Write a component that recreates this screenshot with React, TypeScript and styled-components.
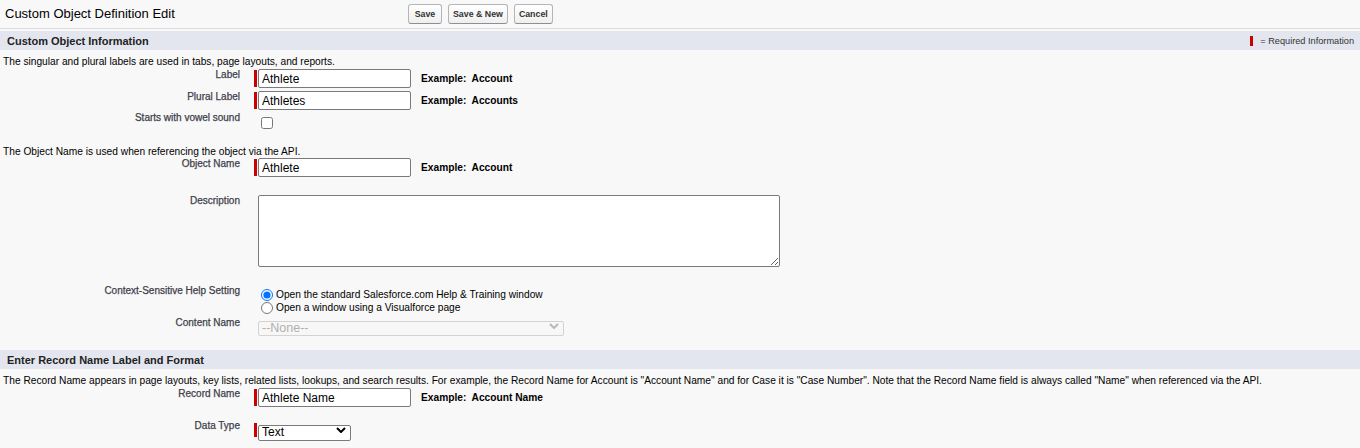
import React from "react";
import styled, { createGlobalStyle } from "styled-components";

const GlobalStyle = createGlobalStyle`
  html, body { margin: 0; padding: 0; background: #f8f8f8; }
  body { font-family: "Liberation Sans", Arial, sans-serif; color: #000; }
  * { box-sizing: border-box; }
`;

const Page = styled.div`
  width: 1360px;
  height: 448px;
  overflow: hidden;
  background: #f8f8f8;
`;

const PageHeader = styled.div`
  display: flex;
  align-items: center;
  height: 29px;
  border-bottom: 1px solid #dcdcdc;
`;

const Title = styled.h2`
  width: 30%;
  margin: 0;
  padding-left: 5px;
  font-size: 13px;
  font-weight: normal;
  line-height: 16px;
  color: #000;
`;

const ButtonBar = styled.div`
  display: flex;
  gap: 6px;
`;

const Btn = styled.button<{ $minW?: number }>`
  height: 20px;
  min-width: ${(p) => p.$minW ?? 0}px;
  padding: 0 4px;
  border: 1px solid #b5b5b5;
  border-bottom-color: #8f8f8f;
  border-radius: 3px;
  background: linear-gradient(#ffffff, #efefef);
  font-family: inherit;
  font-size: 8.8px;
  font-weight: bold;
  color: #333;
`;

const SectionBar = styled.div<{ $mt: number }>`
  margin-top: ${(p) => p.$mt}px;
  height: 19px;
  background: #e3e6ee;
  display: flex;
  align-items: center;
  justify-content: space-between;
  padding: 0 6px 0 7px;
`;

const SectionTitle = styled.h3`
  margin: 0;
  font-size: 11px;
  font-weight: bold;
  color: #222;
`;

const Legend = styled.span`
  display: flex;
  align-items: center;
  font-size: 9.2px;
  color: #333;
`;

const LegendMark = styled.span`
  width: 3px;
  height: 10px;
  background: #c00;
  margin-right: 7px;
`;

const Info = styled.p<{ $mt: number }>`
  margin: ${(p) => p.$mt}px 0 0;
  padding-left: 3px;
  font-size: 10.2px;
  line-height: 13px;
  color: #000;
  white-space: nowrap;
`;

const FieldRow = styled.div<{ $mt: number }>`
  display: grid;
  grid-template-columns: 240px 1fr;
  column-gap: 14px;
  align-items: start;
  margin-top: ${(p) => p.$mt}px;
`;

const FieldLabel = styled.label`
  text-align: right;
  font-size: 10px;
  font-weight: normal;
  line-height: 12px;
  color: #3f3f4a;
  -webkit-text-stroke: 0.25px #3f3f4a;
`;

const DataCell = styled.div<{ $pt?: number; $req?: boolean }>`
  display: flex;
  align-items: stretch;
  padding-top: ${(p) => p.$pt ?? 0}px;
  padding-left: ${(p) => (p.$req ? 0 : 4)}px;
`;

const RequiredBar = styled.span`
  width: 3px;
  margin: 1px 1px 1px 0;
  background: #c00;
`;

const TextInput = styled.input`
  width: 153px;
  height: 19px;
  padding: 0 3px;
  border: 1px solid #7a7a7a;
  border-radius: 2px;
  background: #fff;
  font-family: inherit;
  font-size: 12px;
  color: #000;
`;

const Example = styled.span`
  align-self: center;
  margin-left: 10px;
  font-size: 10.2px;
  font-weight: bold;
  color: #000;
  white-space: pre;
`;

const Check = styled.input`
  width: 12px;
  height: 12px;
  margin: 5px 0 0 3px;
`;

const TextArea = styled.textarea`
  width: 522px;
  height: 72px;
  border: 1px solid #7a7a7a;
  border-radius: 2px;
  background: #fff;
  font-family: inherit;
  font-size: 12px;
`;

const RadioGroup = styled.div`
  display: flex;
  flex-direction: column;
`;

const RadioLine = styled.label`
  display: flex;
  align-items: center;
  height: 13px;
  font-size: 10.2px;
  color: #000;
  white-space: nowrap;
`;

const Radio = styled.input`
  width: 12px;
  height: 12px;
  margin: 0 3px 0 3px;
`;

const SelectWrap = styled.div<{ $w: number; $h: number }>`
  position: relative;
  width: ${(p) => p.$w}px;
  height: ${(p) => p.$h}px;
`;

const Select = styled.select<{ $muted?: boolean }>`
  appearance: none;
  width: 100%;
  height: 100%;
  padding: 0 0 0 3px;
  border: 1px solid ${(p) => (p.$muted ? "#d3d3d3" : "#7a7a7a")};
  border-radius: 2px;
  background: ${(p) => (p.$muted ? "#f7f7f7" : "#fff")};
  font-family: inherit;
  font-size: ${(p) => (p.$muted ? 12.5 : 12)}px;
  line-height: 13px;
  color: ${(p) => (p.$muted ? "#b0b0b0" : "#000")};
  opacity: 1;
`;

const Chevron = styled.svg`
  position: absolute;
  right: 5px;
  top: 50%;
  margin-top: -3px;
  pointer-events: none;
`;

function ChevronIcon({ color }: { color: string }) {
  return (
    <Chevron width="10" height="6" viewBox="0 0 10 6">
      <path d="M1 1 L5 5 L9 1" fill="none" stroke={color} strokeWidth="2" />
    </Chevron>
  );
}

export default function App() {
  return (
    <Page>
      <GlobalStyle />
      <PageHeader>
        <Title>Custom Object Definition Edit</Title>
        <ButtonBar>
          <Btn $minW={34}>Save</Btn>
          <Btn>Save &amp; New</Btn>
          <Btn>Cancel</Btn>
        </ButtonBar>
      </PageHeader>

      <SectionBar $mt={2}>
        <SectionTitle>Custom Object Information</SectionTitle>
        <Legend>
          <LegendMark />= Required Information
        </Legend>
      </SectionBar>

      <Info $mt={5}>The singular and plural labels are used in tabs, page layouts, and reports.</Info>

      <FieldRow $mt={1}>
        <FieldLabel>Label</FieldLabel>
        <DataCell $req>
          <RequiredBar />
          <TextInput defaultValue="Athlete" />
          <Example>{"Example:\u00a0 Account"}</Example>
        </DataCell>
      </FieldRow>

      <FieldRow $mt={3}>
        <FieldLabel>Plural Label</FieldLabel>
        <DataCell $req>
          <RequiredBar />
          <TextInput defaultValue="Athletes" />
          <Example>{"Example:\u00a0 Accounts"}</Example>
        </DataCell>
      </FieldRow>

      <FieldRow $mt={2}>
        <FieldLabel>Starts with vowel sound</FieldLabel>
        <DataCell>
          <Check type="checkbox" />
        </DataCell>
      </FieldRow>

      <Info $mt={16}>The Object Name is used when referencing the object via the API.</Info>

      <FieldRow $mt={0}>
        <FieldLabel>Object Name</FieldLabel>
        <DataCell $req>
          <RequiredBar />
          <TextInput defaultValue="Athlete" />
          <Example>{"Example:\u00a0 Account"}</Example>
        </DataCell>
      </FieldRow>

      <FieldRow $mt={18}>
        <FieldLabel>Description</FieldLabel>
        <DataCell>
          <TextArea />
        </DataCell>
      </FieldRow>

      <FieldRow $mt={18}>
        <FieldLabel>Context-Sensitive Help Setting</FieldLabel>
        <DataCell $pt={3}>
          <RadioGroup>
            <RadioLine>
              <Radio type="radio" name="help" defaultChecked />
              Open the standard Salesforce.com Help &amp; Training window
            </RadioLine>
            <RadioLine>
              <Radio type="radio" name="help" />
              Open a window using a Visualforce page
            </RadioLine>
          </RadioGroup>
        </DataCell>
      </FieldRow>

      <FieldRow $mt={3}>
        <FieldLabel>Content Name</FieldLabel>
        <DataCell $pt={1}>
          <SelectWrap $w={306} $h={15}>
            <Select $muted disabled>
              <option>--None--</option>
            </Select>
            <ChevronIcon color="#b8b8b8" />
          </SelectWrap>
        </DataCell>
      </FieldRow>

      <SectionBar $mt={17}>
        <SectionTitle>Enter Record Name Label and Format</SectionTitle>
      </SectionBar>

      <Info $mt={5}>
        The Record Name appears in page layouts, key lists, related lists, lookups, and search results. For example, the Record Name for Account is "Account Name" and for Case it is "Case Number". Note that the Record Name field is always called "Name" when referenced via the API.
      </Info>

      <FieldRow $mt={1}>
        <FieldLabel>Record Name</FieldLabel>
        <DataCell $req>
          <RequiredBar />
          <TextInput defaultValue="Athlete Name" />
          <Example>{"Example:\u00a0 Account Name"}</Example>
        </DataCell>
      </FieldRow>

      <FieldRow $mt={13}>
        <FieldLabel>Data Type</FieldLabel>
        <DataCell $req $pt={2}>
          <RequiredBar />
          <SelectWrap $w={93} $h={16}>
            <Select defaultValue="Text">
              <option>Text</option>
              <option>Auto Number</option>
            </Select>
            <ChevronIcon color="#000" />
          </SelectWrap>
        </DataCell>
      </FieldRow>
    </Page>
  );
}
